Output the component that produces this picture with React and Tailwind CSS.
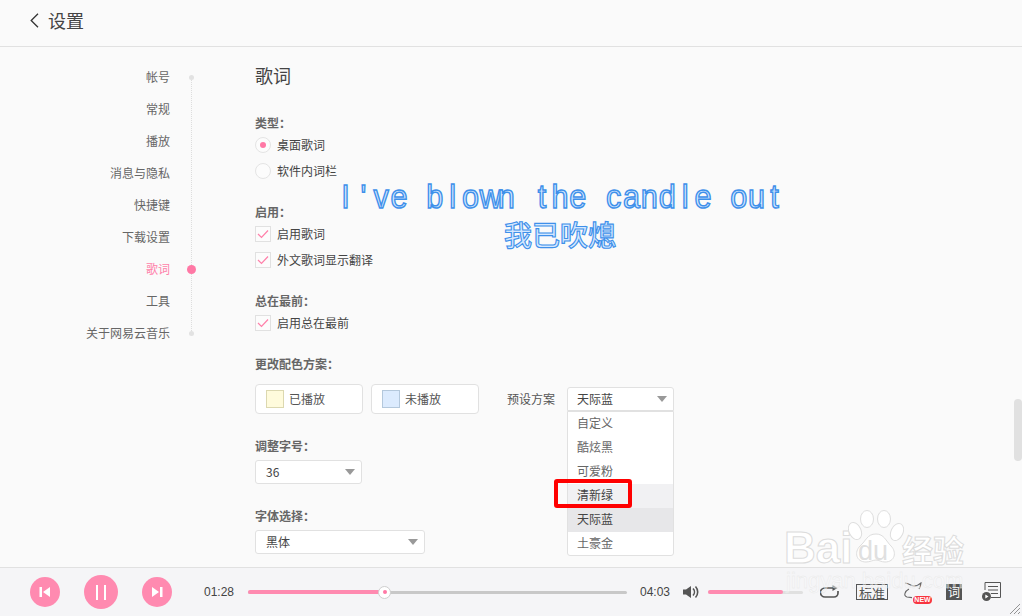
import React from "react";

const FONT = { fontFamily: '"Noto Sans CJK SC", sans-serif' };

const NAV = ["帐号", "常规", "播放", "消息与隐私", "快捷键", "下载设置", "歌词", "工具", "关于网易云音乐"];

function Sidebar() {
  return (
    <div className="w-[255px] shrink-0 pt-[14px] relative">
      {NAV.map((n, i) => (
        <div key={n} className="h-8 flex items-center">
          <div className={`w-[170px] text-right text-xs ${n === "歌词" ? "text-[#ff7fa9]" : "text-[#666666]"}`}>{n}</div>
          <div className="w-[42px] flex justify-center">
            {n === "歌词" ? (
              <span className="w-[9px] h-[9px] rounded-full bg-[#ff78a5] z-10" />
            ) : i === 0 || i === NAV.length - 1 ? (
              <span className="w-[5px] h-[5px] rounded-full bg-[#e2e2e2] z-10" />
            ) : null}
          </div>
        </div>
      ))}
      <div className="absolute left-[191px] top-[30px] h-[256px] border-l border-dotted border-[#dddddd]" />
    </div>
  );
}

function Heading({ children, className = "" }) {
  return <div className={`h-4 leading-4 text-xs font-bold text-[#666666] ${className}`}>{children}</div>;
}

function Radio({ on, label }) {
  return (
    <div className="h-[26px] flex items-center">
      <span className="w-4 h-4 rounded-full border border-[#e4e4e4] bg-[#fcfcfc] flex items-center justify-center">
        {on && <span className="w-[6px] h-[6px] rounded-full bg-[#ff78a5]" />}
      </span>
      <span className="ml-[6px] text-xs text-[#444444]">{label}</span>
    </div>
  );
}

function Check({ label }) {
  return (
    <div className="h-[26px] flex items-center">
      <span className="w-4 h-4 border border-[#e1e1e1] bg-[#fcfcfc] flex items-center justify-center">
        <svg width="12" height="10" viewBox="0 0 12 10" fill="none">
          <path d="M1 5l3.5 3.5L11 1.5" stroke="#ff7fa9" strokeWidth="1.2" />
        </svg>
      </span>
      <span className="ml-[6px] text-xs text-[#444444]">{label}</span>
    </div>
  );
}

function Caret() {
  return <span className="w-0 h-0 border-x-[5px] border-x-transparent border-t-[6px] border-t-[#999999]" />;
}

function Select({ value, className = "" }) {
  return (
    <div className={`h-6 bg-white border border-[#e1e1e1] rounded-[3px] flex items-center justify-between pr-[6px] text-xs text-[#444444] ${className}`}>
      <span>{value}</span>
      <Caret />
    </div>
  );
}

function ColorButton({ swatch, border, label }) {
  return (
    <div className="w-[108px] h-[30px] bg-white border border-[#e1e1e1] rounded-[4px] flex items-center pl-[10px]">
      <span className={`w-[18px] h-[18px] border ${swatch} ${border}`} />
      <span className="ml-[5px] text-xs text-[#555555]">{label}</span>
    </div>
  );
}

function Main() {
  const opts = [
    ["自定义", "", "text-[#666666]"],
    ["酷炫黑", "", "text-[#666666]"],
    ["可爱粉", "", "text-[#666666]"],
    ["清新绿", "bg-[#f1f1f3]", "text-[#444444]"],
    ["天际蓝", "bg-[#e7e7e9]", "text-[#444444]"],
    ["土豪金", "", "text-[#666666]"],
  ];
  return (
    <div className="flex-1 pt-[18px]">
      <div className="text-lg leading-5 h-5 text-[#444444]">歌词</div>
      <Heading className="mt-[30px]">类型：</Heading>
      <div className="mt-[1px]">
        <Radio on label="桌面歌词" />
        <Radio label="软件内词栏" />
      </div>
      <Heading className="mt-[20px]">启用：</Heading>
      <div className="mt-[1px]">
        <Check label="启用歌词" />
        <Check label="外文歌词显示翻译" />
      </div>
      <Heading className="mt-[20px]">总在最前：</Heading>
      <div className="mt-[1px]">
        <Check label="启用总在最前" />
      </div>
      <Heading className="mt-[20px]">更改配色方案：</Heading>
      <div className="mt-[12px] flex items-center h-[30px]">
        <ColorButton swatch="bg-[#fffbdc]" border="border-[#dcd8b0]" label="已播放" />
        <div className="w-2" />
        <ColorButton swatch="bg-[#dcebfe]" border="border-[#b4c8dc]" label="未播放" />
        <span className="ml-[28px] w-[60px] text-xs text-[#555555]">预设方案</span>
        <div className="relative w-[107px]">
          <Select value="天际蓝" className="rounded-b-none pl-[9px]" />
          <div className="absolute left-0 top-[24px] w-[107px] h-[145px] bg-white border border-[#e1e1e1] rounded-b-[3px] z-10">
            {opts.map(([t, bg, c]) => (
              <div key={t} className={`h-6 flex items-center pl-[9px] pb-[2px] text-xs ${bg} ${c}`}>{t}</div>
            ))}
          </div>
          <div className="absolute left-[-13px] top-[92px] w-[78px] h-[29px] border-[4px] border-[#ff0000] rounded-[3px] z-20" />
        </div>
      </div>
      <Heading className="mt-[24px]">调整字号：</Heading>
      <Select value="36" className="w-[107px] mt-[6px] pl-[10px]" />
      <Heading className="mt-[24px]">字体选择：</Heading>
      <Select value="黑体" className="w-[170px] mt-[6px] pl-[10px]" />
    </div>
  );
}

function PlayBtn({ size, children }) {
  return (
    <div className={`${size} rounded-full bg-[#ff8ab0] flex items-center justify-center shrink-0`}>{children}</div>
  );
}

function Footer() {
  return (
    <div className="h-[49px] shrink-0 border-t border-[#e1e1e1] bg-[#f5f5f7] flex items-center pl-[30px] text-xs text-[#444444] relative" style={{ fontFamily: '"Liberation Sans", "Noto Sans CJK SC", sans-serif' }}>
      <PlayBtn size="w-[30px] h-[30px]">
        <svg width="12" height="10" viewBox="0 0 12 10" fill="#fff"><rect x="0.5" y="0" width="2.5" height="10" /><path d="M11 0v10L4 5z" /></svg>
      </PlayBtn>
      <div className="ml-6">
        <PlayBtn size="w-[34px] h-[34px]">
          <svg width="10" height="15" viewBox="0 0 10 15" fill="#fff"><rect x="0" y="0" width="2" height="15" /><rect x="8" y="0" width="2" height="15" /></svg>
        </PlayBtn>
      </div>
      <div className="ml-6">
        <PlayBtn size="w-[30px] h-[30px]">
          <svg width="12" height="10" viewBox="0 0 12 10" fill="#fff"><path d="M1 0v10l7-5z" /><rect x="9" y="0" width="2.5" height="10" /></svg>
        </PlayBtn>
      </div>
      <span className="ml-8 w-[44px]">01:28</span>
      <div className="w-[379px] h-[3px] bg-[#c8c8c8] rounded-full relative">
        <div className="absolute left-0 top-[-0.5px] h-[4px] w-[137px] bg-[#ff8ab0] rounded-full" />
        <div className="absolute left-[130px] top-[-5px] w-[13px] h-[13px] rounded-full bg-white border border-[#cfcfcf] flex items-center justify-center">
          <span className="w-1 h-1 rounded-full bg-[#ff78a5]" />
        </div>
      </div>
      <span className="ml-[13px] w-[43px]">04:03</span>
      <svg width="17" height="14" viewBox="0 0 17 14" fill="#555555">
        <path d="M0 4.5h3L8 1v12L3 9.5H0z" />
        <path d="M10 3.5a5 5 0 0 1 0 7M12.5 1.5a8 8 0 0 1 0 11" fill="none" stroke="#555555" strokeWidth="1.6" />
      </svg>
      <div className="ml-2 w-[95px] h-[3px] bg-[#e0e0e0] rounded-full relative">
        <div className="absolute left-0 top-[-0.5px] h-[4px] w-[75px] bg-[#ff8ab0] rounded-full" />
      </div>
      <svg className="ml-[17px]" width="19" height="15" viewBox="0 0 19 15" fill="none">
        <path d="M13 3H5a4 4 0 0 0 0 9h9a4 4 0 0 0 4-4V6" stroke="#555555" strokeWidth="1.7" />
        <path d="M12.5 0l5 3-5 3z" fill="#555555" />
      </svg>
      <div className="ml-[17px] w-[32px] h-[16px] border border-[#555555] flex items-center justify-center text-[13px] leading-none text-[#555555]" style={FONT}>标准</div>
      <div className="ml-[16px] w-[27px] h-[22px] relative">
        <svg width="20" height="20" viewBox="0 0 20 20" fill="none" className="absolute left-0 top-[1px]">
          <path d="M1 1C5 1 7 4 10 4C13 4 15 3 17 1C17 3 16 5 15 7M5 7C1 9-1 14 3 15L8 15.6" stroke="#666666" strokeWidth="1.1" />
        </svg>
        <span className="absolute right-[-1px] bottom-[-1px] h-[8px] w-[19px] rounded-full bg-[#f8353f] text-white text-[7px] leading-[8px] font-bold text-center">NEW</span>
      </div>
      <div className="ml-[15px] w-4 h-4 bg-[#555555] text-white text-xs leading-4 flex items-center justify-center" style={FONT}>词</div>
      <div className="ml-5 w-[20px] h-[20px] relative">
        <svg width="20" height="20" viewBox="0 0 20 20" fill="none">
          <path d="M3 8V0.5h15.5v15H9" stroke="#555555" strokeWidth="1" />
          <path d="M6 4.5h10M6 8h10M9 11.5h7" stroke="#555555" strokeWidth="1" />
          <circle cx="4.5" cy="14.5" r="4.5" fill="#555555" />
          <path d="M3.3 12.4v4.2l3.2-2.1z" fill="#fff" />
        </svg>
      </div>
      <svg className="absolute right-[2px] bottom-[2px]" width="10" height="10" viewBox="0 0 10 10" fill="none" stroke="#888888" strokeWidth="0.9">
        <path d="M0 10L10 0M4 10l6-6M8 10l2-2" />
      </svg>
    </div>
  );
}

function Lyrics() {
  const line = "I've blown the candle out";
  return (
    <div className="absolute left-0 top-[176px] w-[1120px] text-center z-10 pointer-events-none">
      <div className="h-[40px] leading-[40px] text-[34px] text-[#d4e8ff] [-webkit-text-stroke:1.5px_#3e90ea] whitespace-pre scale-x-[.9]" style={{ fontFamily: '"Liberation Sans", sans-serif' }}>
        {line.split("").map((c, i) => (
          <span key={i} className="inline-block w-[19.87px] text-center">{c}</span>
        ))}
      </div>
      <div className="h-[36px] leading-[36px] text-[28px] font-medium text-[#d4e8ff] [-webkit-text-stroke:1.1px_#3e90ea]" style={FONT}>
        我已吹熄
      </div>
    </div>
  );
}

function Watermark() {
  return (
    <div className="absolute left-[784px] top-[505px] w-[200px] h-[95px] z-20 pointer-events-none">
      <span className="absolute left-0 top-[19px] text-[44px] leading-[48px] font-bold text-white [-webkit-text-stroke:1px_#dcdcdc]" style={{ fontFamily: '"Liberation Sans", sans-serif' }}>Bai</span>
      <svg className="absolute left-[64px] top-[5px]" width="56" height="58" viewBox="0 0 56 58" fill="#ffffff" stroke="#dedede" strokeWidth="1">
        <ellipse cx="7" cy="21" rx="6" ry="9" transform="rotate(-25 7 21)" />
        <ellipse cx="19" cy="9" rx="6.5" ry="8.5" />
        <ellipse cx="36" cy="9" rx="6.5" ry="8.5" />
        <ellipse cx="49" cy="22" rx="6" ry="9" transform="rotate(25 49 22)" />
        <path d="M28 24c8 0 10 7 15 12 6 6 4 16-6 16-4 0-6-2-9-2s-6 2-10 2C8 52 6 42 12 36c6-5 7-12 16-12z" />
      </svg>
      <span className="absolute left-[74px] top-[34px] text-[27px] leading-[24px] text-[#e0e0e0]" style={{ fontFamily: '"Liberation Sans", sans-serif' }}>du</span>
      <span className="absolute left-[118px] top-[24px] text-[31px] leading-[40px] font-bold text-white [-webkit-text-stroke:1px_#dcdcdc] whitespace-nowrap" style={FONT}>经验</span>
      <span className="absolute left-[2px] top-[61px] text-[22px] leading-[30px] text-white/40 [-webkit-text-stroke:0.4px_#e8e8e8] whitespace-nowrap" style={{ fontFamily: '"Liberation Sans", sans-serif' }}>jingyan.baidu.com</span>
    </div>
  );
}

export default function App() {
  return (
    <div className="relative w-[1022px] h-[616px] overflow-hidden bg-[#fafafa] flex flex-col" style={FONT}>
      <div className="h-[47px] shrink-0 border-b border-[#e1e1e1] flex items-center pl-[30px] pb-[6px]">
        <svg width="9" height="15" viewBox="0 0 9 15" fill="none">
          <path d="M8 0.7L1.2 7.5L8 14.3" stroke="#333333" strokeWidth="1.3" />
        </svg>
        <span className="ml-[9px] text-lg text-[#444444]">设置</span>
      </div>
      <div className="flex-1 flex min-h-0 overflow-hidden relative">
        <Sidebar />
        <Main />
      </div>
      <Footer />
      <Lyrics />
      <Watermark />
      <div className="absolute right-0 top-[399px] w-2 h-[62px] rounded-full bg-[#e1e1e1]" />
    </div>
  );
}
